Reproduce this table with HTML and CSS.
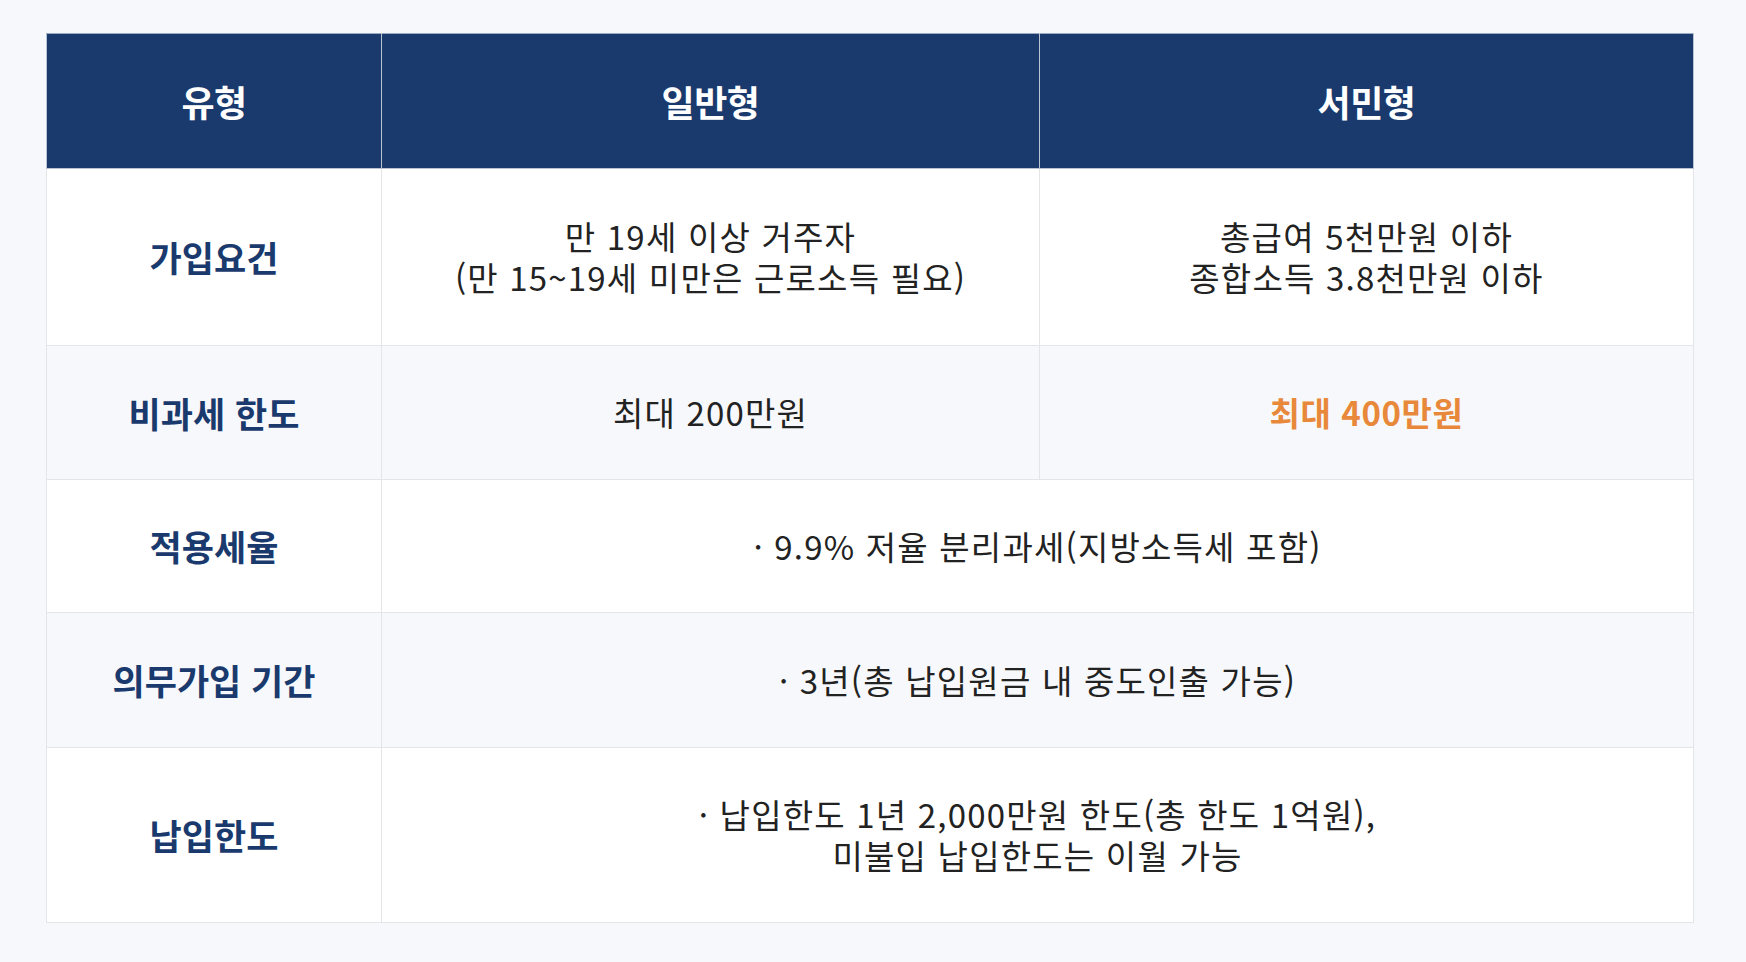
FILE: index.html
```html
<!DOCTYPE html>
<html lang="ko">
<head>
<meta charset="utf-8">
<title>ISA 유형</title>
<link rel="stylesheet" href="styles.css">
</head>
<body>
<div class="wrap">
<table class="isa">
  <colgroup>
    <col class="c1"><col class="c2"><col class="c3">
  </colgroup>
  <thead>
    <tr class="hd">
      <th>유형</th>
      <th>일반형</th>
      <th>서민형</th>
    </tr>
  </thead>
  <tbody>
    <tr class="r1">
      <th>가입요건</th>
      <td>만 19세 이상 거주자<br>(만 15~19세 미만은 근로소득 필요)</td>
      <td>총급여 5천만원 이하<br>종합소득 3.8천만원 이하</td>
    </tr>
    <tr class="r2 alt">
      <th>비과세 한도</th>
      <td>최대 200만원</td>
      <td class="hl">최대 400만원</td>
    </tr>
    <tr class="r3">
      <th>적용세율</th>
      <td colspan="2">· 9.9% 저율 분리과세(지방소득세 포함)</td>
    </tr>
    <tr class="r4 alt">
      <th>의무가입 기간</th>
      <td colspan="2">· 3년(총 납입원금 내 중도인출 가능)</td>
    </tr>
    <tr class="r5">
      <th>납입한도</th>
      <td colspan="2">· 납입한도 1년 2,000만원 한도(총 한도 1억원),<br>미불입 납입한도는 이월 가능</td>
    </tr>
  </tbody>
</table>
</div>
</body>
</html>
```

FILE: styles.css
```css
html, body {
  margin: 0;
  padding: 0;
  background: #f7f8fb;
}
.wrap {
  padding: 33px 53px 0 46px;
}
.isa {
  width: 1647px;
  border-collapse: collapse;
  table-layout: fixed;
  font-family: "Noto Sans CJK KR", "Noto Sans", sans-serif;
}
.c1 { width: 335px; }
.c2 { width: 658px; }
.c3 { width: 654px; }
.isa th, .isa td {
  text-align: center;
  vertical-align: middle;
  padding: 0;
  border: 1px solid #e3e5e9;
}
.hd th {
  background: #1a3a6e;
  color: #ffffff;
  font-size: 36px;
  font-weight: 700;
  letter-spacing: -0.5px;
  line-height: 40px;
  height: 134px;
  border-color: #b9c3d3;
  border-top-color: #9aaac2;
}
.isa tbody th {
  color: #1a3a6e;
  font-size: 35px;
  font-weight: 700;
  letter-spacing: 0;
  line-height: 40px;
  background: #ffffff;
}
.isa tbody td {
  color: #222222;
  font-size: 33px;
  font-weight: 400;
  letter-spacing: 1.2px;
  line-height: 41px;
  background: #ffffff;
}
.isa .alt th, .isa .alt td { background: #f7f8fb; }
.r1 th { height: 176px; }
.r2 th { height: 133px; }
.r3 th { height: 132px; }
.r4 th { height: 134px; }
.r5 th { height: 174px; }
.isa tbody td.hl {
  color: #e8883a;
  font-weight: 700;
  letter-spacing: 0.6px;
}
```
